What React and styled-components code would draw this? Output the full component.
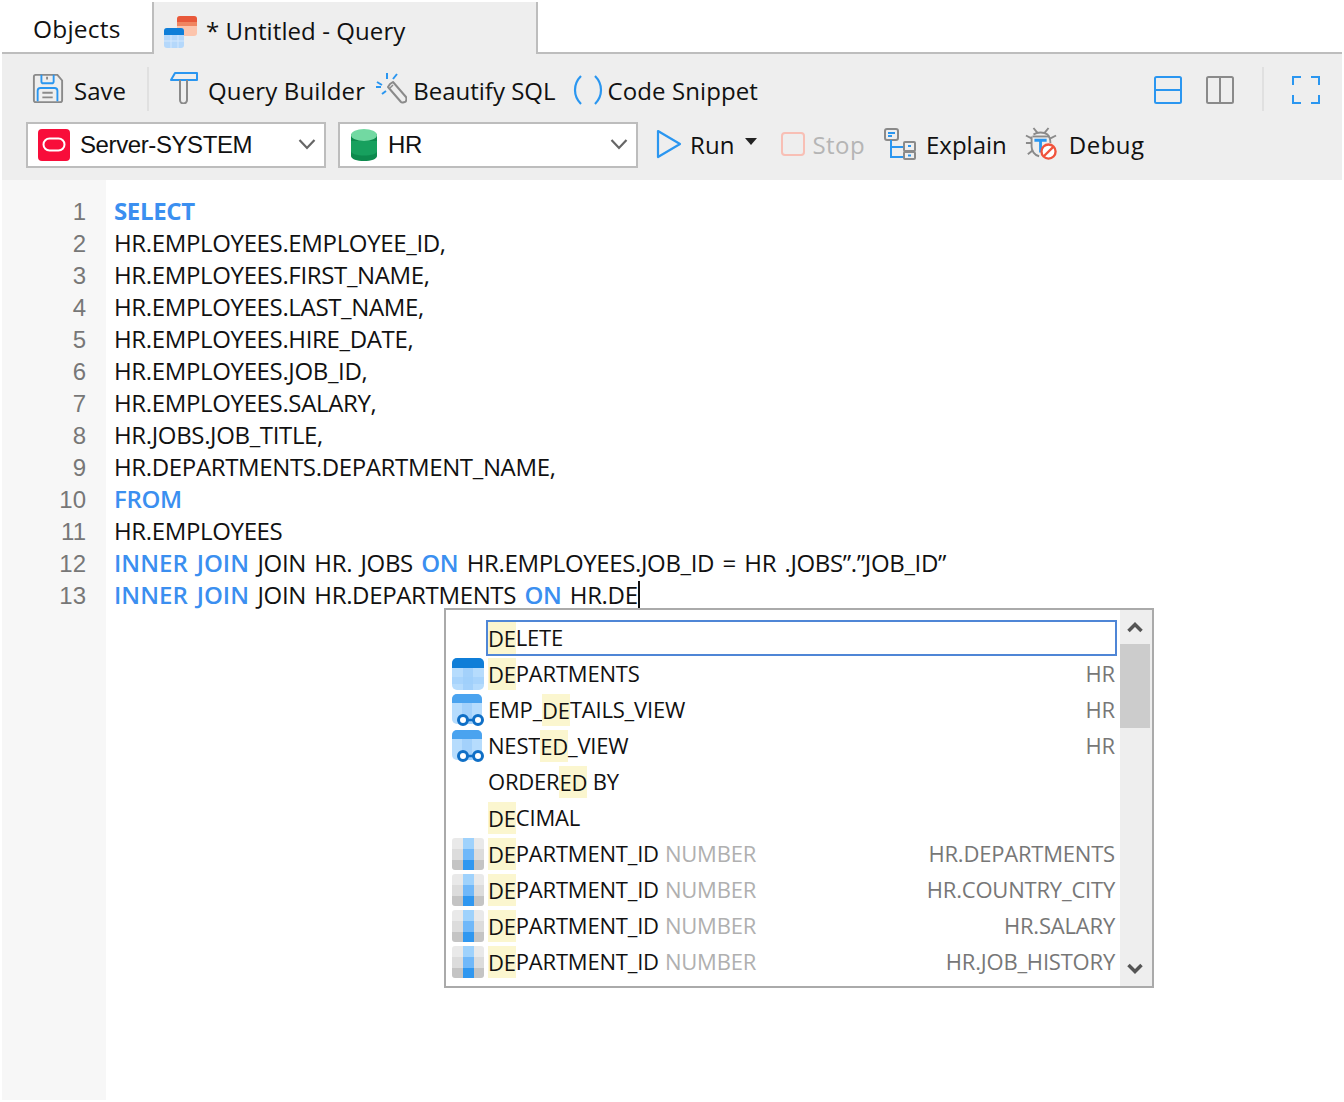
import React from "react";
import styled, { createGlobalStyle } from "styled-components";

const Global = createGlobalStyle`
  html, body { margin: 0; padding: 0; background: #fff; }
  body { font-family: "Open Sans", "Noto Sans", "Liberation Sans", sans-serif; color: #111; }
  * { box-sizing: border-box; }
`;

const Page = styled.div`
  width: 1344px; height: 1102px; padding: 2px;
  display: flex; flex-direction: column; background: #fff; overflow: hidden;
`;
const TabBar = styled.div`display: flex; height: 52px; flex: none; background: #fff; border-bottom: 2px solid #bdbdbd;`;
const ObjectsTab = styled.div`
  width: 150px; display: flex; align-items: center; padding-left: 31px; padding-top: 3px; font-size: 24.5px; letter-spacing: .2px; background: #fff;
`;
const QueryTab = styled.div`
  width: 386px; height: 52px; background: #eee; border-left: 2px solid #bdbdbd; border-right: 2px solid #bdbdbd;
  display: flex; align-items: center; padding: 4px 0 0 10px; font-size: 24px; letter-spacing: .08px; gap: 9px;
`;
const Toolbars = styled.div`background: #eee; height: 126px; flex: none; display: flex; flex-direction: column;`;
const Row = styled.div`display: flex; align-items: center; height: ${p => p.$h}px; padding: ${p => p.$pt || 0}px 0 0 ${p => p.$pl}px;`;
const Tool = styled.div`
  display: flex; align-items: center; gap: ${p => p.$gap}px; margin-left: ${p => p.$ml || 0}px; margin-top: ${p => p.$mt || 0}px;
  font-size: 24px; letter-spacing: ${p => p.$ls ?? 0}px; white-space: nowrap; color: ${p => p.$muted ? "#b5b5b5" : "#111"};
  svg { flex: none; display: block; margin-top: ${p => p.$lift ? -4 : 0}px; }
`;
const VSep = styled.div`width: 2px; height: 44px; background: #e0e0e0; margin-left: ${p => p.$ml}px; margin-top: -2px;`;
const Spacer = styled.div`flex: 1;`;
const EndGap = styled.div`width: 22px; flex: none;`;
const Select = styled.div`
  width: 300px; height: 46px; margin-left: ${p => p.$ml || 0}px; background: #fff; border: 2px solid #bdbdbd;
  display: flex; align-items: center; padding-left: 10px; gap: ${p => p.$gap}px;
  font-family: "Liberation Sans", Arial, sans-serif; font-size: 24px; letter-spacing: -.4px; position: relative;
`;
const Chevron = styled.svg`position: absolute; right: 8px; top: 14px;`;

const Editor = styled.div`flex: 1; display: flex; position: relative; min-height: 0;`;
const Gutter = styled.div`
  width: 104px; flex: none; background: #f7f7f7; padding: 16px 20px 0 0; text-align: right;
  font-family: "Liberation Sans", Arial, sans-serif; font-size: 24px; line-height: 32px; color: #777;
`;
const Code = styled.div`flex: 1; padding: 15px 0 0 8px; font-size: 24px; line-height: 32px; white-space: pre; letter-spacing: -.35px;`;
const CodeLine = styled.div`word-spacing: ${p => p.$spaced ? 2.5 : 0}px;`;
const Kw = styled.span`color: #3b8ff0; font-weight: ${p => p.$b ? 700 : 600}; letter-spacing: ${p => p.$ls ?? -.35}px;`;
const Caret = styled.span`display: inline-block; width: 2px; height: 28px; background: #111; vertical-align: -5px;`;

const Popup = styled.div`
  position: absolute; left: 442px; top: 428px; width: 710px; height: 380px; background: #fff; border: 2px solid #aaa;
  display: flex;
`;
const List = styled.div`flex: 1; padding: 10px 4px 0 6px; display: flex; flex-direction: column;`;
const Item = styled.div`
  height: 36px; flex: none; display: flex; align-items: center; position: relative; font-size: 22px; letter-spacing: -.2px; white-space: pre;
`;
const IconSlot = styled.div`width: 36px; flex: none; height: 32px; svg { display: block; }`;
const Label = styled.div`
  flex: 1; height: 36px; display: flex; align-items: center; margin-top: -2px;
  ${p => p.$selected && "outline: 2px solid #4f86d6; outline-offset: -2px; margin: 0 -1px 0 -2px; padding: 0 0 2px 2px;"}
`;
const Hl = styled.span`background: #fbf6cf; display: inline-block; height: 32px; line-height: 32px; margin-top: 2px;`;
const Type = styled.span`color: #b0b0b0; margin-left: 6px;`;
const Schema = styled.span`color: #777; margin-left: auto; padding-right: 1px;`;
const Scroll = styled.div`width: 32px; flex: none; background: #eee; position: relative; display: flex; flex-direction: column; justify-content: space-between; align-items: center; padding: 12px 2px 12px 0;`;
const Thumb = styled.div`position: absolute; left: 0; top: 34px; width: 30px; height: 84px; background: #ccc;`;

const SaveIcon = () => (
  <svg width="32" height="32" viewBox="0 0 34 34" fill="none">
    <path d="M3 3h24l5 6v21a2 2 0 0 1-2 2H4a2 2 0 0 1-2-2V5a2 2 0 0 1 2-2z" stroke="#8a8a8a" strokeWidth="2"/>
    <path d="M10 3v7a2 2 0 0 0 2 2h9a2 2 0 0 0 2-2V3" stroke="#2a96f0" strokeWidth="2"/>
    <path d="M16 5v3" stroke="#8a8a8a" strokeWidth="2"/>
    <path d="M6 31V20a3 3 0 0 1 3-3h15a3 3 0 0 1 3 3v11" stroke="#2a96f0" strokeWidth="2"/>
    <path d="M11 22h11M11 27h11" stroke="#8a8a8a" strokeWidth="2"/>
  </svg>
);
const HammerIcon = () => (
  <svg width="30" height="32" viewBox="0 0 30 32" fill="none">
    <path d="M6 1h22v7H2z" stroke="#2a96f0" strokeWidth="2" strokeLinejoin="round"/>
    <path d="M11 8v20a3.5 3.5 0 0 0 7 0V8" stroke="#8a8a8a" strokeWidth="2"/>
  </svg>
);
const WandIcon = () => (
  <svg width="32" height="32" viewBox="0 0 32 32" fill="none">
    <path d="M12 1v6M2 10l5 3M22 2l-4 5M1 15h5M7 22l4-3" stroke="#2a96f0" strokeWidth="2"/>
    <path d="M15 11l3-2 13 15c1 2 0 5-1 5s-3 1-4 0L13 14z" stroke="#8a8a8a" strokeWidth="2" strokeLinejoin="round" transform="translate(0,1)"/>
    <path d="M18 13l-3 3" stroke="#8a8a8a" strokeWidth="1.5"/>
  </svg>
);
const ParenIcon = () => (
  <svg width="32" height="30" viewBox="0 0 32 30" fill="none" stroke="#2a96f0" strokeWidth="2.2">
    <path d="M9 1C1 9 1 21 9 29"/><path d="M23 1c8 8 8 20 0 28"/>
  </svg>
);
const SplitIcon = ({ color, v }) => (
  <svg width="28" height="28" viewBox="0 0 28 28" fill="none" stroke={color} strokeWidth="2">
    <rect x="1" y="1" width="26" height="26" rx="1.5"/>
    {v ? <path d="M14 1v26"/> : <path d="M1 14h26"/>}
  </svg>
);
const FullIcon = () => (
  <svg width="28" height="28" viewBox="0 0 28 28" fill="none" stroke="#2a96f0" strokeWidth="2">
    <path d="M9 1H1v8M19 1h8v8M9 27H1v-8M19 27h8v-8"/>
  </svg>
);
const OracleIcon = () => (
  <svg width="32" height="32" viewBox="0 0 32 32">
    <rect width="32" height="32" rx="4" fill="#f80d3a"/>
    <rect x="5.5" y="9.5" width="21" height="12" rx="6" fill="none" stroke="#fff" strokeWidth="2"/>
  </svg>
);
const DbIcon = () => (
  <svg width="28" height="32" viewBox="0 0 28 32">
    <path d="M1 5v22c0 3 6 5 13 5s13-2 13-5V5z" fill="#0d8a4e"/>
    <path d="M1 12v10c0 3 6 4.500 13 4.500S27 25 27 22V12z" fill="#17a05e"/>
    <ellipse cx="14" cy="6" rx="13" ry="6" fill="#72d9a2"/>
  </svg>
);
const RunIcon = () => (
  <svg width="26" height="30" viewBox="0 0 26 30" fill="none"><path d="M2 2l22 13L2 28z" stroke="#2a96f0" strokeWidth="2.2" strokeLinejoin="round"/></svg>
);
const CaretSvg = styled.svg`margin-left: 2px; && { margin-top: -6px; }`;
const CaretDown = () => (
  <CaretSvg width="12" height="7" viewBox="0 0 12 7"><path d="M0 0h12L6 7z" fill="#222"/></CaretSvg>
);
const StopIcon = () => (
  <svg width="24" height="24" viewBox="0 0 24 24" fill="none"><rect x="1" y="1" width="22" height="22" rx="3" stroke="#f8bfb5" strokeWidth="2"/></svg>
);
const ExplainIcon = () => (
  <svg width="32" height="32" viewBox="0 0 32 32" fill="none">
    <rect x="1" y="1" width="13" height="11" rx="2" stroke="#8a8a8a" strokeWidth="2"/>
    <path d="M4 5h7M4 8h4" stroke="#2a96f0" strokeWidth="2"/>
    <path d="M7 12v17h13M7 19h13" stroke="#2a96f0" strokeWidth="2"/>
    <rect x="20" y="14" width="11" height="9" rx="1" stroke="#8a8a8a" strokeWidth="2"/>
    <rect x="20" y="24" width="11" height="7" rx="1" stroke="#8a8a8a" strokeWidth="2"/>
    <path d="M24 18h3M24 27.500h3" stroke="#2a96f0" strokeWidth="2"/>
  </svg>
);
const DebugIcon = () => (
  <svg width="32" height="34" viewBox="0 0 34 36" fill="none">
    <path d="M9 1l4 5M25 1l-4 5M1 17h6M1 9l6 3M3 29l5-4M33 9l-6 3M9 8c4-3 11-3 15 0 3 3 3 8 3 9" stroke="#8a8a8a" strokeWidth="2"/>
    <path d="M8 10h18" stroke="#8a8a8a" strokeWidth="2"/>
    <path d="M7 10v11c0 4 3 9 8 10" stroke="#8a8a8a" strokeWidth="2"/>
    <path d="M10 14h13M16.500 14v13" stroke="#2a96f0" strokeWidth="3"/>
    <circle cx="25" cy="26" r="7.500" stroke="#f0533c" strokeWidth="2.500" fill="#fff"/>
    <path d="M20 31l10-10" stroke="#f0533c" strokeWidth="2.500"/>
  </svg>
);
const TabIconSvg = styled.svg`flex: none; margin-top: 4px;`;
const TabIcon = () => (
  <TabIconSvg width="33" height="32" viewBox="0 0 33 32">
    <rect x="13" y="0" width="20" height="20" rx="3" fill="#fcc4ac"/>
    <path d="M13 3a3 3 0 0 1 3-3h14a3 3 0 0 1 3 3v3H13z" fill="#e8583a"/>
    <rect x="13" y="6" width="20" height="4" fill="#f08560"/>
    <rect x="0" y="12" width="20" height="20" rx="3" fill="#b5d8fb"/>
    <path d="M0 15a3 3 0 0 1 3-3h14a3 3 0 0 1 3 3v4H0z" fill="#0f7ed8"/>
    <path d="M7 19v13M14 19v13M0 25h20" stroke="#d4e8fd" strokeWidth="1"/>
  </TabIconSvg>
);
const TableIcon = () => (
  <svg width="32" height="32" viewBox="0 0 32 32">
    <rect width="32" height="32" rx="5" fill="#b6dcfd"/>
    <rect x="11" y="8" width="10" height="24" fill="#a3d1fb"/>
    <rect y="19" width="32" height="7" fill="#9fcffb" opacity=".6"/>
    <path d="M0 5a5 5 0 0 1 5-5h22a5 5 0 0 1 5 5v5H0z" fill="#0f7ed8"/>
  </svg>
);
const ViewIcon = () => (
  <svg width="32" height="32" viewBox="0 0 32 32">
    <rect width="30" height="30" rx="5" fill="#b6dcfd"/>
    <rect x="10" y="8" width="10" height="22" fill="#a3d1fb"/>
    <path d="M0 5a5 5 0 0 1 5-5h20a5 5 0 0 1 5 5v4H0z" fill="#4aa3ef"/>
    <circle cx="11" cy="26" r="4.500" fill="#fff" stroke="#0f6fc6" strokeWidth="3"/>
    <circle cx="26" cy="26" r="4.500" fill="#fff" stroke="#0f6fc6" strokeWidth="3"/>
    <path d="M15 26h7" stroke="#0f6fc6" strokeWidth="2.500"/>
  </svg>
);
const ColumnIcon = () => (
  <svg width="32" height="32" viewBox="0 0 32 32">
    <path d="M0 11V3a3 3 0 0 1 3-3h26a3 3 0 0 1 3 3v8z" fill="#e9e9e9"/>
    <rect y="11" width="32" height="11" fill="#dcdcdc"/>
    <path d="M0 22h32v7a3 3 0 0 1-3 3H3a3 3 0 0 1-3-3z" fill="#c4c4c4"/>
    <rect x="11" width="11" height="11" fill="#9fd2fc"/>
    <rect x="11" y="11" width="11" height="11" fill="#70b8f9"/>
    <rect x="11" y="22" width="11" height="10" fill="#2f97f0"/>
  </svg>
);
const Arrow = ({ up }) => (
  <svg width="16" height="11" viewBox="0 0 16 11" fill="none">
    <path d={up ? "M1.500 9L8 2.500 14.500 9" : "M1.500 2L8 8.500 14.500 2"} stroke="#555" strokeWidth="3.500"/>
  </svg>
);

const lines = [
  <Kw $b>SELECT</Kw>,
  "HR.EMPLOYEES.EMPLOYEE_ID,",
  "HR.EMPLOYEES.FIRST_NAME,",
  "HR.EMPLOYEES.LAST_NAME,",
  "HR.EMPLOYEES.HIRE_DATE,",
  "HR.EMPLOYEES.JOB_ID,",
  "HR.EMPLOYEES.SALARY,",
  "HR.JOBS.JOB_TITLE,",
  "HR.DEPARTMENTS.DEPARTMENT_NAME,",
  <Kw>FROM</Kw>,
  "HR.EMPLOYEES",
  <><Kw $ls={.05}>INNER JOIN</Kw> JOIN HR. JOBS <Kw>ON</Kw> HR.EMPLOYEES.JOB_ID = HR .JOBS”.”JOB_ID”</>,
  <><Kw $ls={.05}>INNER JOIN</Kw> JOIN HR.DEPARTMENTS <Kw>ON</Kw> HR.DE<Caret /></>,
];

const items = [
  { icon: null, pre: "", hl: "DE", post: "LETE", selected: true },
  { icon: <TableIcon />, pre: "", hl: "DE", post: "PARTMENTS", schema: "HR" },
  { icon: <ViewIcon />, pre: "EMP_", hl: "DE", post: "TAILS_VIEW", schema: "HR" },
  { icon: <ViewIcon />, pre: "NEST", hl: "ED", post: "_VIEW", schema: "HR" },
  { icon: null, pre: "ORDER", hl: "ED", post: " BY" },
  { icon: null, pre: "", hl: "DE", post: "CIMAL" },
  { icon: <ColumnIcon />, pre: "", hl: "DE", post: "PARTMENT_ID", type: "NUMBER", schema: "HR.DEPARTMENTS" },
  { icon: <ColumnIcon />, pre: "", hl: "DE", post: "PARTMENT_ID", type: "NUMBER", schema: "HR.COUNTRY_CITY" },
  { icon: <ColumnIcon />, pre: "", hl: "DE", post: "PARTMENT_ID", type: "NUMBER", schema: "HR.SALARY" },
  { icon: <ColumnIcon />, pre: "", hl: "DE", post: "PARTMENT_ID", type: "NUMBER", schema: "HR.JOB_HISTORY" },
];

export default function App() {
  return (
    <Page>
      <Global />
      <TabBar>
        <ObjectsTab>Objects</ObjectsTab>
        <QueryTab><TabIcon />* Untitled - Query</QueryTab>
      </TabBar>
      <Toolbars>
        <Row $h={68} $pl={30} $pt={4}>
          <Tool $gap={10} $lift><SaveIcon />Save</Tool>
          <VSep $ml={21} />
          <Tool $gap={9} $ml={20} $ls={.15} $lift><HammerIcon />Query Builder</Tool>
          <Tool $gap={6} $ml={10} $lift><WandIcon />Beautify SQL</Tool>
          <Tool $gap={4} $ml={16} $ls={.1}><ParenIcon />Code Snippet</Tool>
          <Spacer />
          <Tool><SplitIcon color="#2a96f0" /></Tool>
          <Tool $ml={24}><SplitIcon color="#8a8a8a" v /></Tool>
          <VSep $ml={28} />
          <Tool $ml={28}><FullIcon /></Tool>
          <EndGap />
        </Row>
        <Row $h={46} $pl={24}>
          <Select $gap={10}>
            <OracleIcon />Server-SYSTEM
            <Chevron width="18" height="12" viewBox="0 0 18 12" fill="none"><path d="M1.500 2L9 10l7.500-8" stroke="#666" strokeWidth="2.200"/></Chevron>
          </Select>
          <Select $ml={12} $gap={10}>
            <DbIcon />HR
            <Chevron width="18" height="12" viewBox="0 0 18 12" fill="none"><path d="M1.500 2L9 10l7.500-8" stroke="#666" strokeWidth="2.200"/></Chevron>
          </Select>
          <Tool $gap={8} $ml={18} $mt={-2} $ls={.1}><RunIcon />Run<CaretDown /></Tool>
          <Tool $gap={8} $ml={24} $mt={-2} $ls={.4} $muted><StopIcon />Stop</Tool>
          <Tool $gap={10} $ml={19} $mt={-2}><ExplainIcon />Explain</Tool>
          <Tool $gap={12} $ml={18} $mt={-2} $ls={.5}><DebugIcon />Debug</Tool>
        </Row>
      </Toolbars>
      <Editor>
        <Gutter>{lines.map((_, i) => <div key={i}>{i + 1}</div>)}</Gutter>
        <Code>{lines.map((l, i) => <CodeLine key={i} $spaced={i >= 11}>{l}</CodeLine>)}</Code>
        <Popup>
          <List>
            {items.map((it, i) => (
              <Item key={i}>
                <IconSlot>{it.icon}</IconSlot>
                <Label $selected={it.selected}>
                  {it.pre}<Hl>{it.hl}</Hl>{it.post}
                  {it.type && <Type>{it.type}</Type>}
                  {it.schema && <Schema>{it.schema}</Schema>}
                </Label>
              </Item>
            ))}
          </List>
          <Scroll>
            <Thumb />
            <Arrow up />
            <Arrow />
          </Scroll>
        </Popup>
      </Editor>
    </Page>
  );
}
